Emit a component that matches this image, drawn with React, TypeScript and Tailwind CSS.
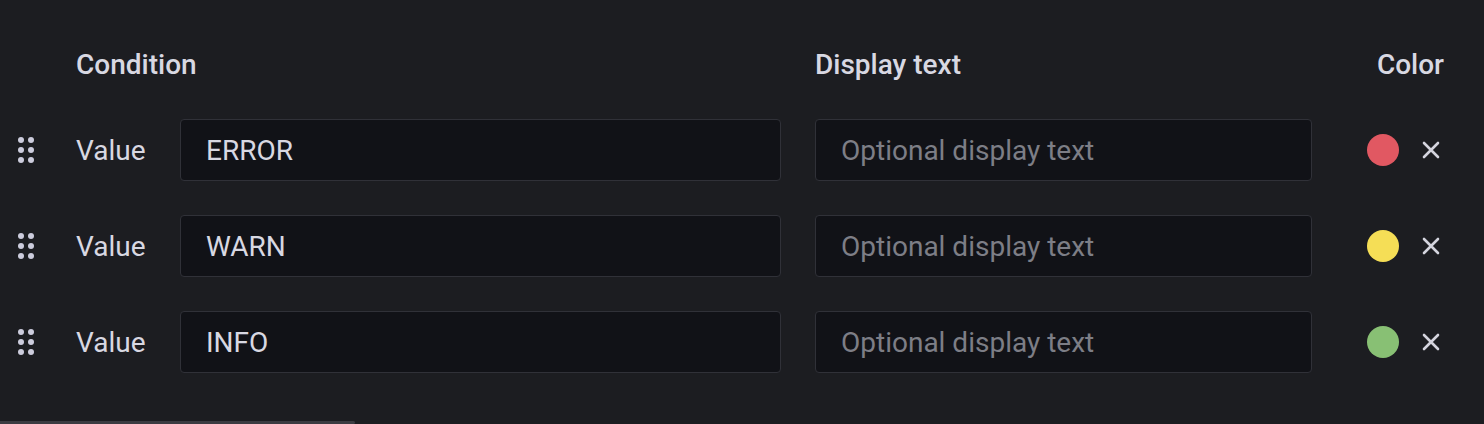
import React from "react";

type Row = { value: string; color: string };

const rows: Row[] = [
  { value: "ERROR", color: "bg-[#e15862]" },
  { value: "WARN", color: "bg-[#f5de56]" },
  { value: "INFO", color: "bg-[#88c074]" },
];

function DragHandle() {
  return (
    <div className="grid grid-cols-2 gap-x-[4px] gap-y-[4px] w-[16px]">
      {Array.from({ length: 6 }).map((_, i) => (
        <span key={i} className="block w-[6px] h-[6px] rounded-full bg-[#ccccdc]" />
      ))}
    </div>
  );
}

function CloseIcon() {
  return (
    <svg width="18" height="18" viewBox="0 0 18 18" fill="none">
      <path d="M2 2L16 16M16 2L2 16" stroke="#d4d4de" strokeWidth="2.6" strokeLinecap="round" />
    </svg>
  );
}

export default function App() {
  return (
    <div
      className="w-[1484px] h-[424px] bg-[#1c1d21] text-[#d8d8e2] relative overflow-hidden"
      style={{ fontFamily: "Roboto, 'Noto Sans', sans-serif" }}
    >
      <div className="flex items-center h-[40px] mt-[45px] text-[28px] font-medium">
        <div className="w-[76px]" />
        <div className="w-[739px]">Condition</div>
        <div className="w-[497px]">Display text</div>
        <div className="flex-1 flex justify-end pr-[40px]">Color</div>
      </div>

      <div className="flex flex-col gap-[34px] mt-[34px]">
        {rows.map((r) => (
          <div key={r.value} className="flex items-center h-[62px]">
            <div className="w-[76px] pl-[18px]">
              <DragHandle />
            </div>
            <div className="w-[104px] text-[28px] pt-[2px]">Value</div>
            <div className="w-[601px] h-[62px] flex items-center pl-[25px] pt-[2px] rounded-[4px] border border-[#303138] bg-[#111217] text-[28px] text-[#d8d8e2]">
              {r.value}
            </div>
            <div className="w-[34px]" />
            <div className="w-[497px] h-[62px] flex items-center pl-[25px] pt-[2px] rounded-[4px] border border-[#303138] bg-[#111217] text-[28px] text-[#7d7e86]">
              Optional display text
            </div>
            <div className="flex items-center ml-[55px] gap-[23px]">
              <span className={`block w-[32px] h-[32px] rounded-full ${r.color}`} />
              <CloseIcon />
            </div>
          </div>
        ))}
      </div>

      <div className="absolute left-0 bottom-0 w-[355px] h-[3px] bg-[#3b3c42] rounded-r-sm" />
    </div>
  );
}
